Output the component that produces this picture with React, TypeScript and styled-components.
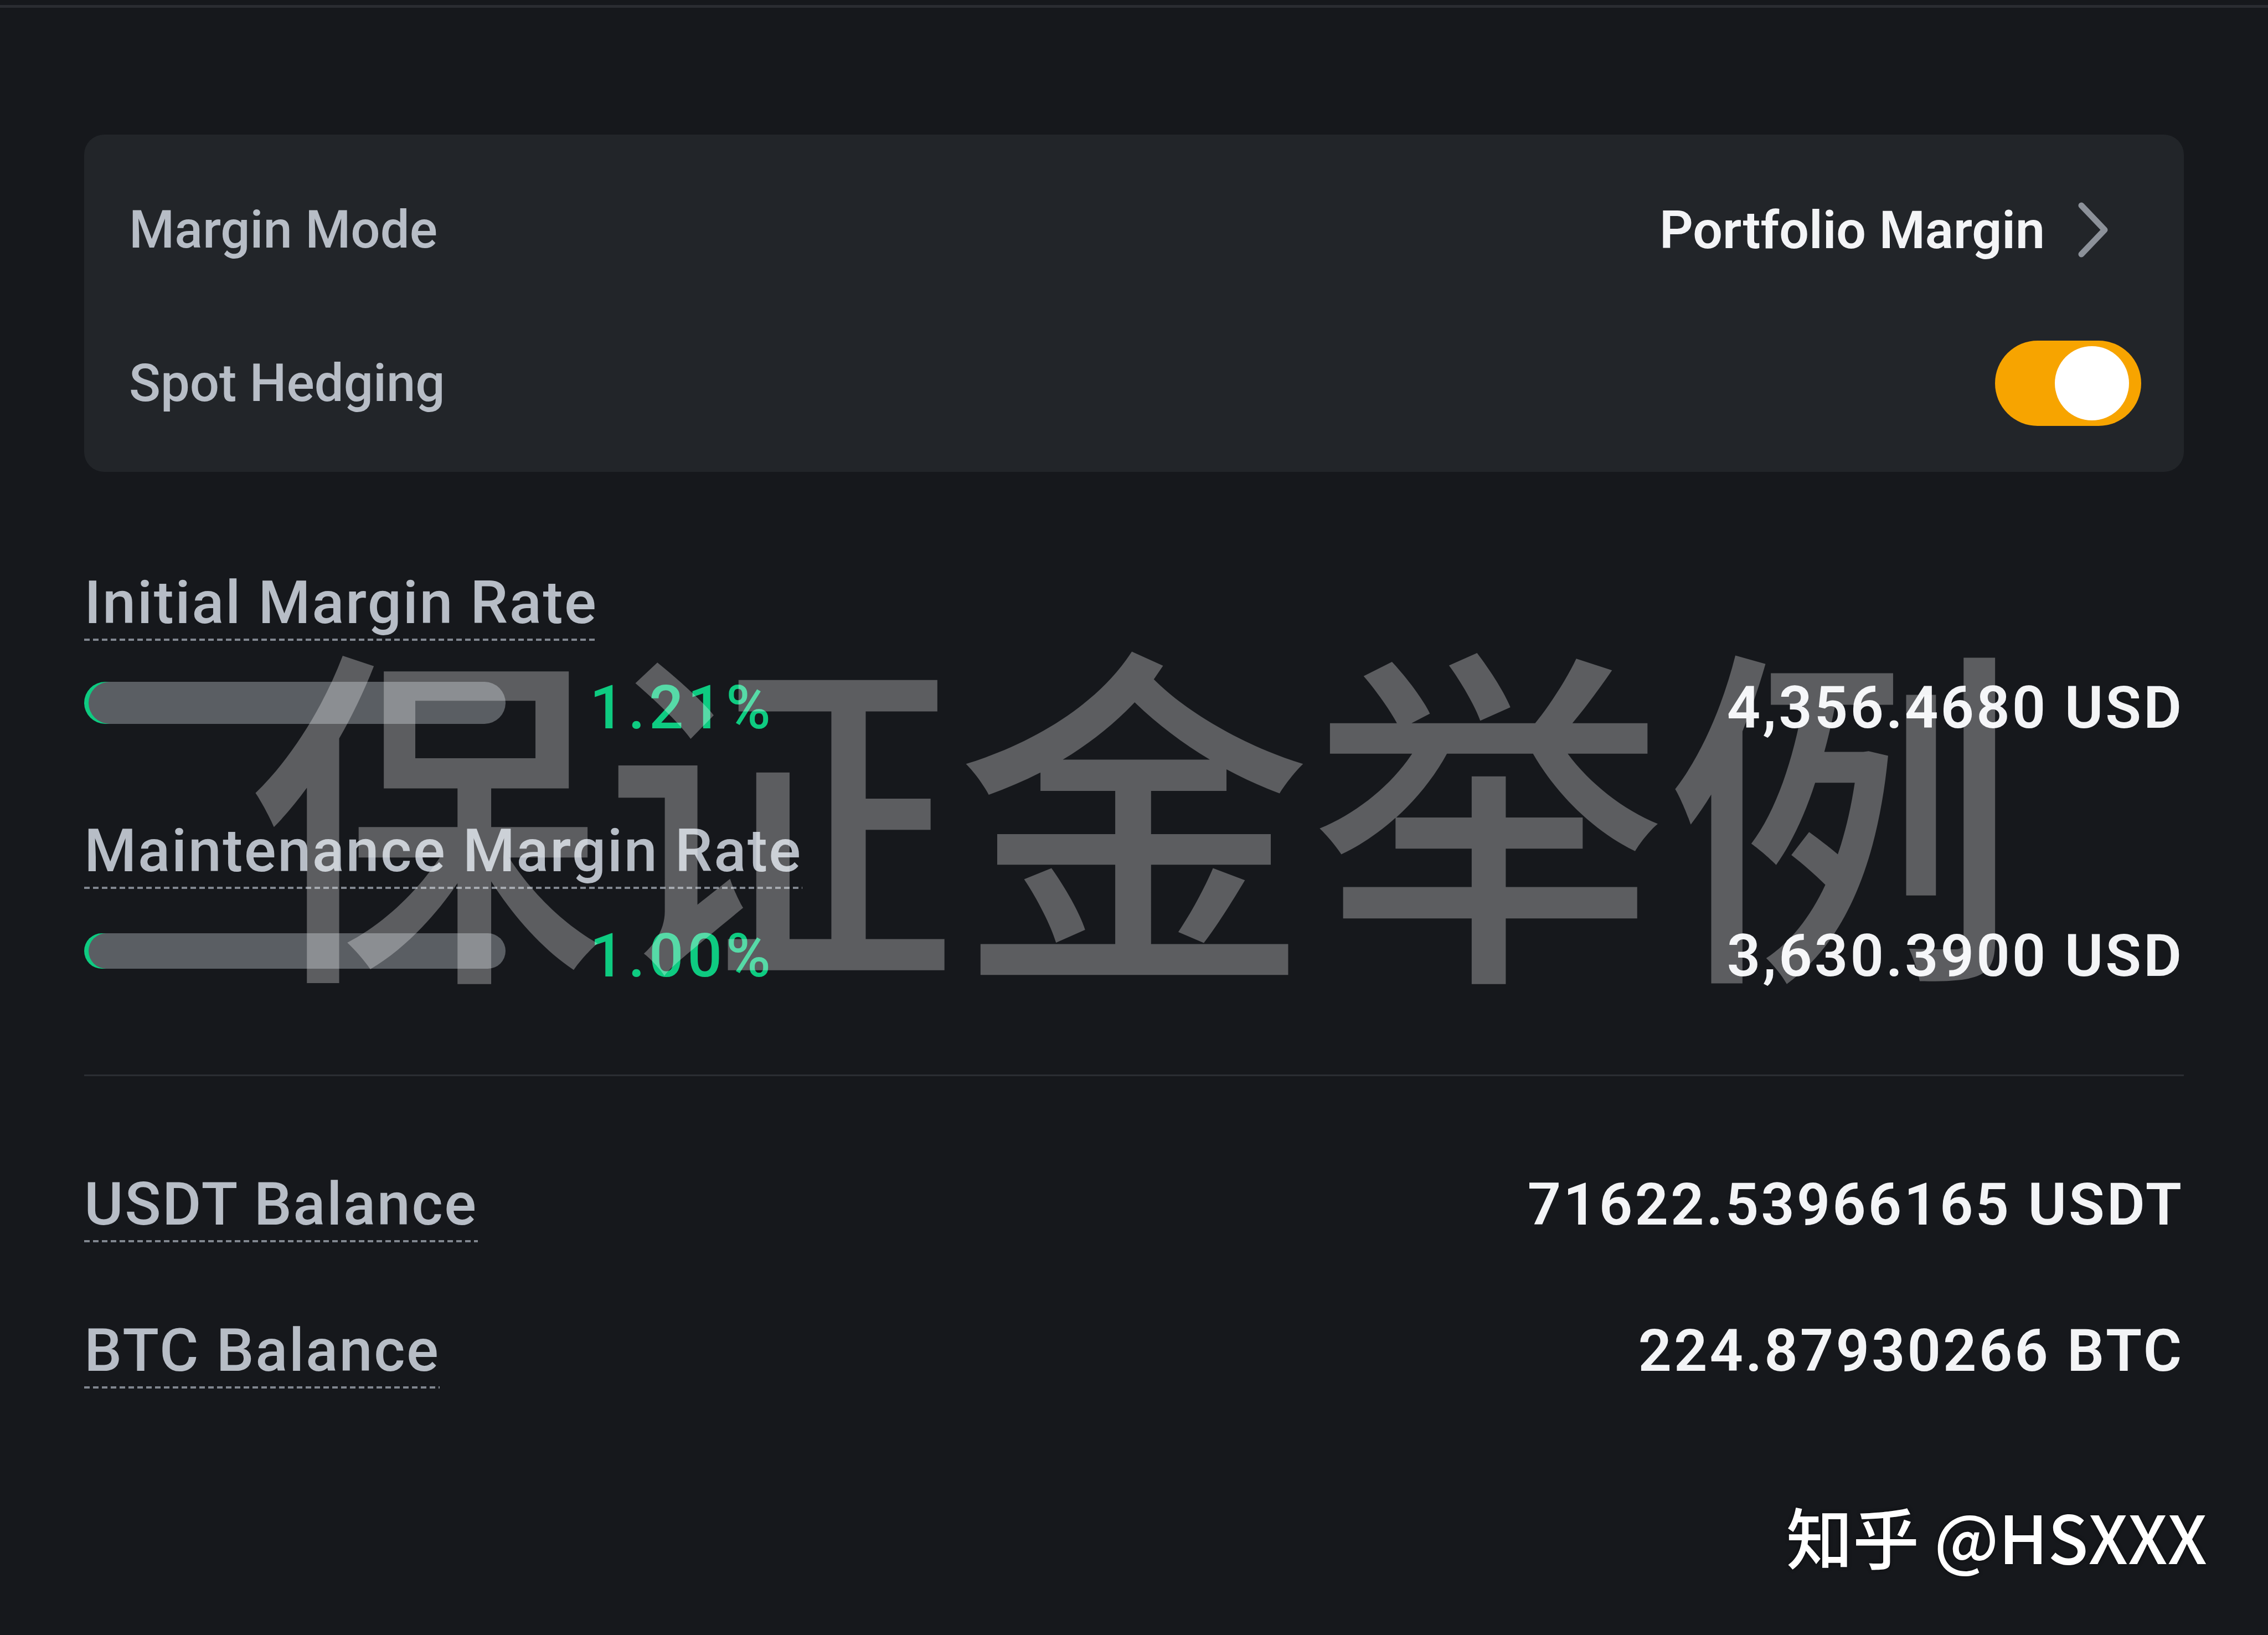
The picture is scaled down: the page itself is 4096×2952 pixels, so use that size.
import React from 'react';
import styled, { createGlobalStyle } from 'styled-components';

const GlobalStyle = createGlobalStyle`
  html, body {
    margin: 0;
    padding: 0;
    background: #16181c;
  }
`;

const Page = styled.div`
  position: relative;
  width: 4096px;
  height: 2952px;
  overflow: hidden;
  background: #16181c;
  font-family: Roboto, "Noto Sans", sans-serif;
`;

const TopRule = styled.div`
  height: 5px;
  margin-top: 9px;
  background: #2a2c31;
`;

const Content = styled.div`
  display: flex;
  flex-direction: column;
  padding: 0 152px;
`;

const Card = styled.div`
  margin-top: 229px;
  background: #222529;
  border-radius: 36px;
  padding: 60px 77px 48px 81px;
  display: flex;
  flex-direction: column;
  gap: 53px;
`;

const CardRow = styled.div`
  height: 224px;
  display: flex;
  align-items: center;
  justify-content: space-between;
`;

const CardLabel = styled.span`
  font-size: 94px;
  line-height: 1;
  font-weight: 500;
  color: #b7bdc6;
`;

const CardValue = styled.div`
  display: flex;
  align-items: center;
  gap: 60px;
  margin-right: 58px;
  font-size: 95px;
  line-height: 1;
  font-weight: 600;
  color: #f3f4f6;
`;

const Chevron = styled.svg`
  width: 56px;
  height: 100px;
  display: block;
`;

const Toggle = styled.div<{ $on: boolean }>`
  width: 264px;
  height: 154px;
  border-radius: 77px;
  background: ${(p) => (p.$on ? '#f7a400' : '#474d57')};
  display: flex;
  align-items: center;
  justify-content: ${(p) => (p.$on ? 'flex-end' : 'flex-start')};
  padding: 0 22px 0 11px;
  box-sizing: border-box;
`;

const Knob = styled.div`
  width: 134px;
  height: 134px;
  border-radius: 50%;
  background: #ffffff;
`;

const Block = styled.div<{ $top: number }>`
  margin-top: ${(p) => p.$top}px;
  display: flex;
  flex-direction: column;
  align-items: flex-start;
`;

const DottedLabel = styled.span`
  display: inline-block;
  padding-bottom: 15px;
  font-size: 108px;
  line-height: 1;
  font-weight: 500;
  letter-spacing: 2.5px;
  color: #b7bdc6;
  background-image: repeating-linear-gradient(
    to right,
    #80868f 0 10px,
    transparent 10px 16px
  );
  background-size: calc(100% + 8px) 4px;
  background-position: left bottom;
  background-repeat: no-repeat;
`;

const BarRow = styled.div`
  margin-top: 66px;
  width: 100%;
  display: flex;
  align-items: center;
`;

const Bar = styled.div<{ $h: number }>`
  width: 753px;
  height: ${(p) => p.$h}px;
  margin-left: 8px;
  margin-bottom: 18px;
  border-radius: 40px;
  background: #5a5e63;
  box-shadow: -8px 0 0 0 #0ecb81;
`;

const Percent = styled.span`
  margin-left: 152px;
  font-size: 110px;
  line-height: 1;
  font-weight: 500;
  letter-spacing: 7px;
  color: #0ecb81;
`;

const Amount = styled.span`
  margin-left: auto;
  font-size: 106px;
  line-height: 1;
  font-weight: 600;
  letter-spacing: 4px;
  color: #f3f4f6;
`;

const Divider = styled.div`
  margin-top: 159px;
  height: 3px;
  background: #2b2e33;
`;

const BalanceRow = styled.div<{ $top: number }>`
  margin-top: ${(p) => p.$top}px;
  display: flex;
  align-items: baseline;
  justify-content: space-between;
`;

const Watermark = styled.div`
  position: absolute;
  left: 0;
  right: 0;
  top: 1124px;
  text-align: center;
  font-family: "Noto Sans CJK SC", sans-serif;
  font-size: 640px;
  font-weight: 500;
  line-height: 1;
  color: rgba(255, 255, 255, 0.3);
  pointer-events: none;
  white-space: nowrap;
`;

const Credit = styled.div`
  position: absolute;
  right: 110px;
  top: 2712px;
  font-family: "Noto Sans CJK SC", sans-serif;
  font-size: 120px;
  font-weight: 500;
  line-height: 1;
  color: #ffffff;
  text-shadow: 0 0 6px rgba(0, 0, 0, 0.6);
  white-space: nowrap;
`;

const rates = [
  { label: 'Initial Margin Rate', pct: '1.21%', amount: '4,356.4680 USD', top: 182, bar: 76 },
  { label: 'Maintenance Margin Rate', pct: '1.00%', amount: '3,630.3900 USD', top: 149, bar: 64 },
];

const balances = [
  { label: 'USDT Balance', amount: '71622.53966165 USDT', top: 177 },
  { label: 'BTC Balance', amount: '224.87930266 BTC', top: 141 },
];

export default function App() {
  return (
    <Page>
      <GlobalStyle />
      <TopRule />
      <Content>
        <Card>
          <CardRow>
            <CardLabel>Margin Mode</CardLabel>
            <CardValue>
              Portfolio Margin
              <Chevron viewBox="0 0 56 100">
                <polyline
                  points="6,6 48,50 6,94"
                  fill="none"
                  stroke="#8c9199"
                  strokeWidth="11"
                  strokeLinecap="round"
                  strokeLinejoin="round"
                />
              </Chevron>
            </CardValue>
          </CardRow>
          <CardRow>
            <CardLabel>Spot Hedging</CardLabel>
            <Toggle $on>
              <Knob />
            </Toggle>
          </CardRow>
        </Card>

        {rates.map((r) => (
          <Block key={r.label} $top={r.top}>
            <DottedLabel>{r.label}</DottedLabel>
            <BarRow>
              <Bar $h={r.bar} />
              <Percent>{r.pct}</Percent>
              <Amount>{r.amount}</Amount>
            </BarRow>
          </Block>
        ))}

        <Divider />

        {balances.map((b) => (
          <BalanceRow key={b.label} $top={b.top}>
            <DottedLabel>{b.label}</DottedLabel>
            <Amount>{b.amount}</Amount>
          </BalanceRow>
        ))}
      </Content>

      <Watermark>保证金举例</Watermark>
      <Credit>知乎 @HSXXX</Credit>
    </Page>
  );
}
